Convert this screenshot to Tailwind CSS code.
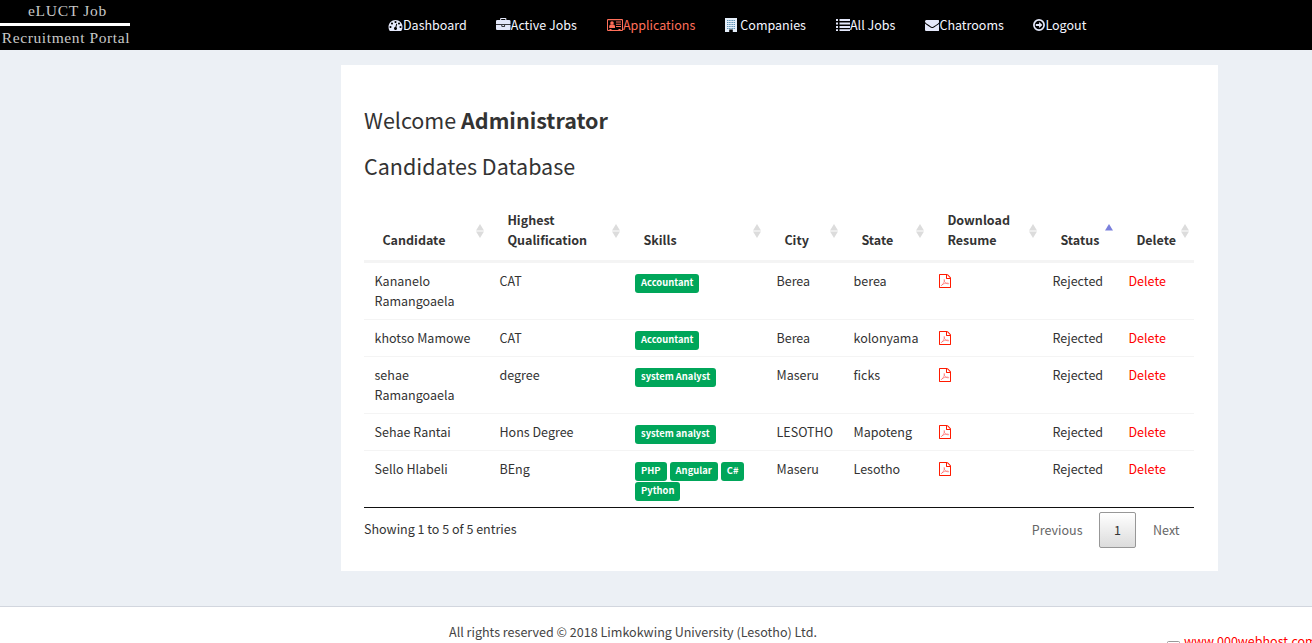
<!DOCTYPE html>
<html lang="en">
<head>
<meta charset="utf-8">
<title>eLUCT Job Recruitment Portal</title>
<script src="https://cdn.jsdelivr.net/npm/@tailwindcss/browser@4"></script>
</head>
<body class="h-[643px] overflow-hidden bg-[#ecf0f5] font-['Noto_Sans_CJK_SC',sans-serif] text-[12.53px] leading-5 text-[#333]">
<svg class="hidden">
  <symbol id="pdf" viewBox="0 0 1536 1792"><path d="M1468 380q28 28 48 76t20 88v1152q0 40-28 68t-68 28h-1344q-40 0-68-28t-28-68v-1600q0-40 28-68t68-28h896q40 0 88 20t76 48zm-444-244v376h376q-10-29-22-41l-313-313q-12-12-41-22zm384 1528v-1024h-416q-40 0-68-28t-28-68v-416h-768v1536h1280z"/><path fill="none" stroke="currentColor" stroke-width="80" d="M290 1480C450 1400 640 1130 700 850C730 650 620 660 650 800C700 1040 870 1230 1150 1260C1330 1270 1260 1150 1080 1160C800 1180 530 1250 380 1390C290 1480 260 1520 290 1480Z"/></symbol>
  <symbol id="sort" viewBox="0 0 8 14"><path d="M4 0L8 6.4H0zM0 7.6H8L4 14z"/></symbol>
</svg>
<header class="flex h-[50px] bg-black text-[#f4f6ff]">
  <div class="w-[131px] text-center font-['Liberation_Serif',serif] text-[15.5px] text-[#c8c8c8]">
    <div class="h-[23px] pl-1 leading-[22px] tracking-[0.75px]">eLUCT Job</div>
    <div class="h-[3px] w-[130px] bg-white"></div>
    <div class="whitespace-nowrap pl-px leading-[24px] tracking-[0.6px]">Recruitment Portal</div>
  </div>
  <nav class="ml-[242px] flex">
    <a class="flex items-center px-[15px]"><svg class="h-3.5 w-[15px]" fill="#e4e8fa" viewBox="0 0 1792 1792"><path d="M384 1152q0-53-37.5-90.5t-90.5-37.5-90.5 37.5-37.5 90.5 37.5 90.5 90.5 37.5 90.5-37.5 37.5-90.5zm192-448q0-53-37.5-90.5t-90.5-37.5-90.5 37.5-37.5 90.5 37.5 90.5 90.5 37.5 90.5-37.5 37.5-90.5zm428 481l101-382q6-26-7.5-48.5t-38.5-29.5-48 6.5-30 39.5l-101 382q-60 5-107 43.5t-63 98.5q-20 77 20 146t117 89 146-20 89-117q16-60-6-117t-72-91zm660-33q0-53-37.5-90.5t-90.5-37.5-90.5 37.5-37.5 90.5 37.5 90.5 90.5 37.5 90.5-37.5 37.5-90.5zm-640-640q0-53-37.5-90.5t-90.5-37.5-90.5 37.5-37.5 90.5 37.5 90.5 90.5 37.5 90.5-37.5 37.5-90.5zm448 192q0-53-37.5-90.5t-90.5-37.5-90.5 37.5-37.5 90.5 37.5 90.5 90.5 37.5 90.5-37.5 37.5-90.5zm320 448q0 261-141 483-19 29-54 29h-1402q-35 0-54-29-141-221-141-483 0-182 71-348t191-286 286-191 348-71 348 71 286 191 191 286 71 348z"/></svg>Dashboard</a>
    <a class="-ml-[0.5px] flex items-center px-[15px]"><svg class="h-3.5 w-[14.5px]" fill="#e4e8fa" viewBox="0 0 1792 1792" preserveAspectRatio="none"><path d="M640 256h512v-128h-512v128zm1152 640v480q0 66-47 113t-113 47h-1472q-66 0-113-47t-47-113v-480h672v160q0 26 19 45t45 19h320q26 0 45-19t19-45v-160h672zm-768 0v128h-256v-128h256zm768-480v384h-1792v-384q0-66 47-113t113-47h352v-160q0-40 28-68t68-28h576q40 0 68 28t28 68v160h352q66 0 113 47t47 113z"/></svg>Active Jobs</a>
    <a class="flex items-center px-[15px] text-[#ff6f5a]"><svg class="h-3.5 w-4" viewBox="0 0 16 14" fill="currentColor"><path fill-rule="evenodd" d="M1 1h14a1 1 0 0 1 1 1v10a1 1 0 0 1-1 1H1a1 1 0 0 1-1-1V2a1 1 0 0 1 1-1zM1 2.2v9.7h1.5V11h2v.9h7V11h2v.9H15V2.2z"/><circle cx="5" cy="5" r="1.8"/><path d="M2.2 10V8.2Q2.4 6.4 3.5 6.4H6.5Q7.8 6.4 8 8.2V10zM9 3.6h5v1H9zM9 5.8h5v1H9zM9 8h5v1H9z"/></svg>Applications</a>
    <a class="flex items-center px-[15px]"><svg class="mr-[3px] h-3.5 w-3" viewBox="0 0 12 14"><path fill="#e4eefa" d="M0 0h12v14H7.8v-2.4H4.2V14H0z"/><path stroke="#5c93b5" stroke-dasharray="1.2 .5" d="M2 2.5h8M2 4.5h8M2 6.5h8M2 8.5h8M2 10.5h8"/></svg>Companies</a>
    <a class="flex items-center px-[15px]"><svg class="size-3.5" viewBox="0 0 14 14" fill="#e4e8fa"><path d="M0 1h2v2H0zM3.5 1H14v2H3.5zM0 4.5h2v2H0zM3.5 4.5H14v2H3.5zM0 8h2v2H0zM3.5 8H14v2H3.5zM0 11.3h2v1.7H0zM3.5 11.3H14V13H3.5z"/></svg>All Jobs</a>
    <a class="-ml-[0.5px] flex items-center px-[15px]"><svg class="h-3.5 w-[14.5px]" viewBox="0 0 1792 1792" preserveAspectRatio="none" fill="#e4e8fa"><path d="M1792 710v794q0 66-47 113t-113 47h-1472q-66 0-113-47t-47-113v-794q44 49 101 87 362 246 497 345 57 42 92.5 65.5t94.5 48 110 24.5h2q51 0 110-24.5t94.5-48 92.5-65.5q170-123 498-345 57-39 100-87zm0-294q0 79-49 151t-122 123q-376 261-468 325-10 7-42.5 31t-54 38.5-52 32.5-57.5 27-50 9h-2q-23 0-50-9t-57.5-27-52-32.5-54-38.5-42.5-31q-91-64-262-182.5t-205-142.5q-62-42-117-115.5t-55-136.5q0-78 41.5-130t118.5-52h1472q65 0 112.5 47t47.5 113z"/></svg>Chatrooms</a>
    <a class="-ml-[0.5px] flex items-center px-[15px]"><svg class="h-3.5 w-3" viewBox="0 0 12 14"><circle cx="6" cy="7" r="5.1" fill="none" stroke="#e4e8fa" stroke-width="1.7"/><path fill="#e4e8fa" d="M2.8 6.1h3.3V4L9.4 7 6.1 10V7.9H2.8z"/></svg>Logout</a>
  </nav>
</header>
<main class="mt-[15px] ml-[341px] h-[506px] w-[877px] bg-white px-[23px] pt-[42px]">
  <h3 class="text-[21.5px] leading-[26px]">Welcome <b>Administrator</b></h3>
  <h3 class="mt-5 text-[21.5px] leading-[26px]">Candidates Database</h3>
  <table class="mt-[21px] w-[830px] table-fixed border-separate border-spacing-0 border-b border-[#111] [&_td]:border-t [&_td]:border-[#f4f4f4] [&_td]:px-[10.5px] [&_td]:py-2 [&_td]:align-top [&_th]:relative [&_th]:border-b-2 [&_th]:border-[#f4f4f4] [&_th]:px-[18.4px] [&_th]:py-2.5 [&_th]:text-left [&_th]:align-bottom [&_th>svg]:absolute [&_th>svg]:top-6 [&_th>svg]:right-[5px] [&_th>svg]:h-3.5 [&_th>svg]:w-2 [&_th>svg]:fill-[#dcdcdc]">
    <colgroup><col class="w-[125px]"><col class="w-[136px]"><col class="w-[141px]"><col class="w-[77px]"><col class="w-[86px]"><col class="w-[113px]"><col class="w-[76px]"><col class="w-[76px]"></colgroup>
    <thead><tr>
      <th>Candidate<svg><use href="#sort"/></svg></th><th>Highest<br>Qualification<svg><use href="#sort"/></svg></th><th>Skills<svg><use href="#sort"/></svg></th><th>City<svg><use href="#sort"/></svg></th><th>State<svg><use href="#sort"/></svg></th><th>Download<br>Resume<svg><use href="#sort"/></svg></th><th>Status<svg viewBox="0 0 8 14"><path fill="#7a80dc" d="M4 0L8 6.5H0z"/></svg></th><th>Delete<svg><use href="#sort"/></svg></th>
    </tr></thead>
    <tbody id="rows" class="[&_i]:mr-[3px] [&_i]:inline-block [&_i]:h-[19px] [&_i]:rounded-[3px] [&_i]:bg-[#00a65a] [&_i]:px-[6px] [&_i]:align-top [&_i]:text-[9.4px] [&_i]:leading-[17px] [&_i]:font-bold [&_i]:text-white [&_i]:not-italic [&_i]:mt-[3px] [&_i]:-mb-[2px]"></tbody>
  </table>
  <div class="flex justify-between">
    <div class="pt-[11px]">Showing 1 to 5 of 5 entries</div>
    <div class="mt-1 flex h-9 items-center text-[#666]"><span class="mr-[16.5px]">Previous</span><span class="mr-[17px] flex h-9 w-[37px] items-center justify-center rounded-[2px] border border-[#979797] bg-linear-to-b from-white to-[#dcdcdc] text-[#333]">1</span><span class="mr-[15.5px]">Next</span></div>
  </div>
</main>
<footer class="mt-[35px] flex h-[60px] border-t border-[#d2d6de] bg-white text-[#444]">
  <div class="ml-[449px] w-[718px] shrink-0 pt-[15px] text-[12.55px]">All rights reserved © 2018 Limkokwing University (Lesotho) Ltd.</div>
  <div class="flex shrink-0 pt-[24px] text-[#f00]"><svg class="mt-[10px] mr-1 h-4 w-[13px]" viewBox="0 0 13 16"><path fill="none" stroke="#999" d="M.5 16V1.5Q.5.5 1.5.5H11.5Q12.5.5 12.5 1.5V16"/></svg><span>www.000webhost.com</span></div>
</footer>
<script>
const data = [
  ['Kananelo Ramangoaela', 'CAT', ['Accountant'], 'Berea', 'berea'],
  ['khotso Mamowe', 'CAT', ['Accountant'], 'Berea', 'kolonyama'],
  ['sehae Ramangoaela', 'degree', ['system Analyst'], 'Maseru', 'ficks'],
  ['Sehae Rantai', 'Hons Degree', ['system analyst'], 'LESOTHO', 'Mapoteng'],
  ['Sello Hlabeli', 'BEng', ['PHP', 'Angular', 'C#', 'Python'], 'Maseru', 'Lesotho']
];
document.getElementById('rows').innerHTML = data.map(([name, degree, skills, city, state]) =>
  `<tr><td>${name}</td><td class="whitespace-nowrap">${degree}</td><td><div class="-ml-[0.5px] h-5">${skills.map(s => `<i>${s}</i>`).join('')}</div>${skills.length > 1 ? '<div class="h-5"></div>' : ''}</td><td>${city}</td><td class="whitespace-nowrap">${state}</td><td><svg class="-ml-[0.5px] mt-[3px] h-3.5 w-3 fill-[#ff1a00] text-[#ff6060]"><use href="#pdf"/></svg></td><td>Rejected</td><td class="text-[#f00]">Delete</td></tr>`).join('');
</script>
</body>
</html>
